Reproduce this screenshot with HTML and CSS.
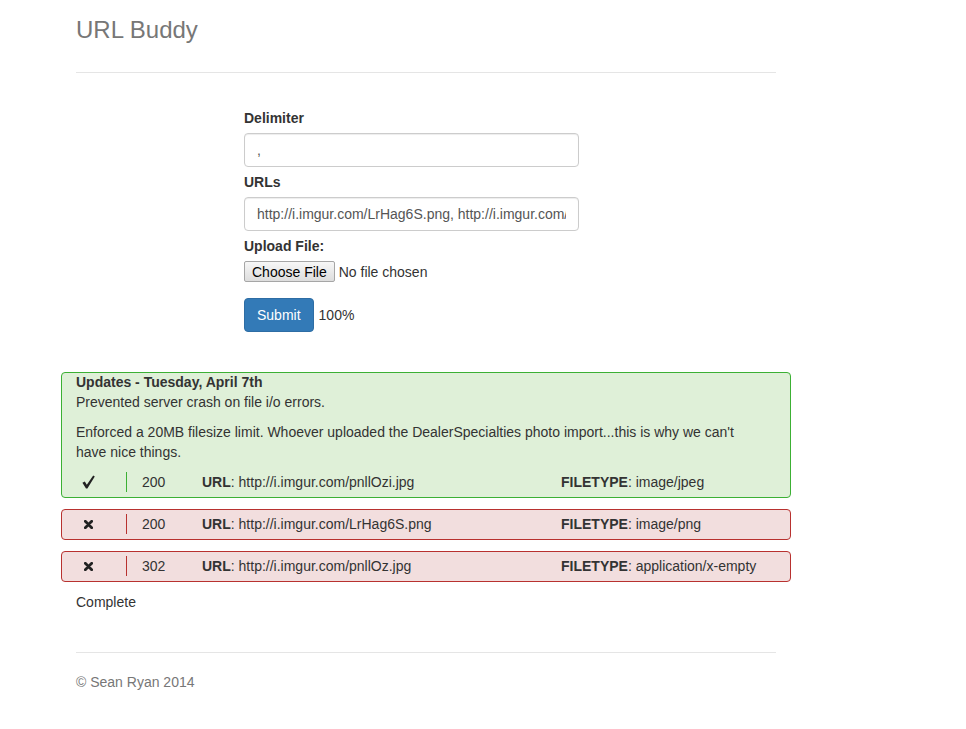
FILE: index.html
```html
<!DOCTYPE html>
<html lang="en">
<head>
<meta charset="utf-8">
<title>URL Buddy</title>
<link rel="stylesheet" href="styles.css">
</head>
<body>
<div class="container">
  <div class="header">
    <h3 class="title">URL Buddy</h3>
  </div>

  <form class="url-form">
    <div class="form-group">
      <label class="field-label" for="delim">Delimiter</label>
      <input class="form-control" id="delim" type="text" value=",">
    </div>
    <div class="form-group">
      <label class="field-label" for="urls">URLs</label>
      <input class="form-control" id="urls" type="text" value="http://i.imgur.com/LrHag6S.png, http://i.imgur.com/pnllOzi.jpg, http://i.imgur.com/pnllOz.jpg">
    </div>
    <div class="form-group">
      <label class="field-label" for="file">Upload File:</label>
      <input class="file-input" id="file" type="file">
    </div>
    <div class="submit-row">
      <button class="btn-primary" type="button">Submit</button>
      <span class="progress-text">100%</span>
    </div>
  </form>

  <div class="alert alert-success">
    <strong class="alert-title">Updates - Tuesday, April 7th</strong>
    <p class="alert-text">Prevented server crash on file i/o errors.</p>
    <p class="alert-text">Enforced a 20MB filesize limit. Whoever uploaded the DealerSpecialties photo import...this is why we can't have nice things.</p>
    <div class="result-row">
      <span class="status-cell">
        <svg class="icon-check" width="13" height="14" viewBox="0 0 13 14"><path d="M0.4 7.8 L2.8 6.4 L4.8 9.8 L11.2 0.6 L12.8 1.6 L5.4 13.4 L4.0 13.4 Z" fill="#222"/></svg>
      </span>
      <span class="code-cell">200</span>
      <span class="url-cell"><b>URL</b>: http://i.imgur.com/pnllOzi.jpg</span>
      <span class="type-cell"><b>FILETYPE</b>: image/jpeg</span>
    </div>
  </div>

  <div class="alert alert-danger">
    <div class="result-row">
      <span class="status-cell">
        <svg class="icon-x" width="9" height="9" viewBox="0 0 9 9"><path d="M1.3 1.3 L7.7 7.7 M7.7 1.3 L1.3 7.7" stroke="#222" stroke-width="2.8" stroke-linecap="round"/></svg>
      </span>
      <span class="code-cell">200</span>
      <span class="url-cell"><b>URL</b>: http://i.imgur.com/LrHag6S.png</span>
      <span class="type-cell"><b>FILETYPE</b>: image/png</span>
    </div>
  </div>

  <div class="alert alert-danger">
    <div class="result-row">
      <span class="status-cell">
        <svg class="icon-x" width="9" height="9" viewBox="0 0 9 9"><path d="M1.3 1.3 L7.7 7.7 M7.7 1.3 L1.3 7.7" stroke="#222" stroke-width="2.8" stroke-linecap="round"/></svg>
      </span>
      <span class="code-cell">302</span>
      <span class="url-cell"><b>URL</b>: http://i.imgur.com/pnllOz.jpg</span>
      <span class="type-cell"><b>FILETYPE</b>: application/x-empty</span>
    </div>
  </div>

  <p class="status-text">Complete</p>

  <div class="footer">
    <p class="footer-text">© Sean Ryan 2014</p>
  </div>
</div>
</body>
</html>
```

FILE: styles.css
```css
* { box-sizing: border-box; }

html, body {
  margin: 0;
  padding: 0;
  background: #fff;
}

body {
  font-family: "Liberation Sans", Arial, sans-serif;
  font-size: 14px;
  line-height: 20px;
  color: #333;
}

.container {
  width: 730px;
  margin-left: 61px;
}

.header {
  margin: 0 15px;
  padding: 17px 0 29px;
  border-bottom: 1px solid #e5e5e5;
}

.title {
  margin: 0;
  font-size: 24px;
  line-height: 26px;
  font-weight: normal;
  color: #777;
}

.url-form {
  width: 335px;
  margin: 35px 0 0 183px;
}

.form-group {
  margin-bottom: 5px;
}

.field-label {
  display: block;
  margin-bottom: 5px;
  font-weight: bold;
}

.form-control {
  display: block;
  width: 100%;
  height: 34px;
  padding: 6px 12px;
  font-family: "Liberation Sans", Arial, sans-serif;
  font-size: 14px;
  line-height: 20px;
  color: #555;
  background: #fff;
  border: 1px solid #ccc;
  border-radius: 4px;
  box-shadow: inset 0 1px 1px rgba(0,0,0,0.075);
  outline: none;
}

.file-input {
  display: block;
  height: 22px;
  font-family: "Liberation Sans", Arial, sans-serif;
  font-size: 14px;
  color: #333;
}

.file-input::file-selector-button {
  font-family: "Liberation Sans", Arial, sans-serif;
  font-size: 14px;
  color: #000;
  height: 21px;
  padding: 0 7px;
  margin-right: 4px;
  border: 1px solid #a6a6a6;
  border-radius: 2px;
  background: linear-gradient(#f7f7f7, #dddddd);
}

.submit-row {
  display: flex;
  align-items: baseline;
  gap: 5px;
  margin-top: 15px;
}

.btn-primary {
  height: 34px;
  padding: 6px 12px;
  font-family: "Liberation Sans", Arial, sans-serif;
  font-size: 14px;
  line-height: 20px;
  color: #fff;
  background: #337ab7;
  border: 1px solid #2e6da4;
  border-radius: 4px;
}

.alert {
  border: 1px solid;
  border-radius: 4px;
  padding: 4px 14px 5px;
  margin-bottom: 11px;
}

.alert-success {
  margin-top: 40px;
  padding-top: 0;
  padding-bottom: 5px;
  background: #dff0d8;
  border-color: #3cb034;
}

.alert-danger {
  background: #f2dede;
  border-color: #b8312f;
}

.alert-title {
  display: block;
  margin-top: -1px;
  font-weight: bold;
}

.alert-text {
  margin: 0 0 10px;
  max-width: 675px;
}

.result-row {
  display: grid;
  grid-template-columns: 51px 75px 359px 1fr;
  align-items: center;
}

.alert-success .result-row {
  margin-top: 1px;
}

.status-cell {
  height: 20px;
  display: flex;
  align-items: center;
  padding-left: 6px;
  border-right: 1px solid;
}

.alert-success .status-cell { border-color: #3cb034; }
.alert-danger .status-cell { border-color: #b8312f; padding-left: 8px; }

.code-cell {
  padding-left: 15px;
}

.status-text {
  margin: -1px 0 0;
  padding-left: 15px;
}

.footer {
  margin: 40px 15px 0;
  padding-top: 19px;
  border-top: 1px solid #e5e5e5;
}

.footer-text {
  margin: 0;
  color: #777;
}
```
